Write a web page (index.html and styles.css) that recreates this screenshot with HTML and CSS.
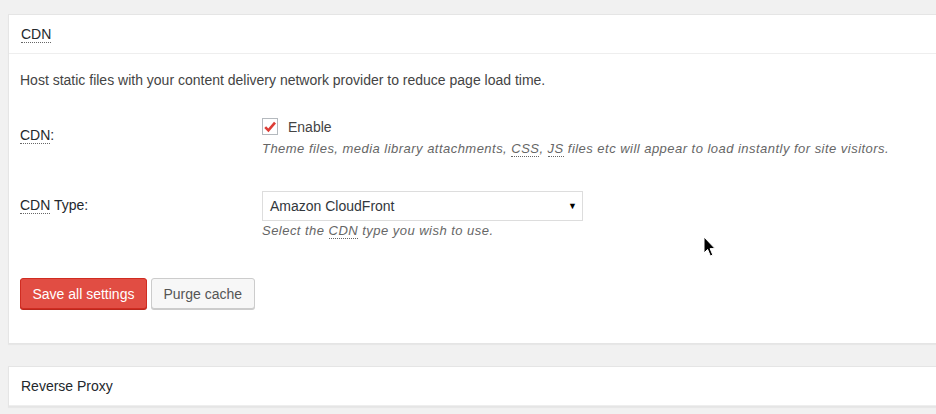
FILE: index.html
```html
<!DOCTYPE html>
<html lang="en">
<head>
<meta charset="utf-8">
<title>CDN settings</title>
<link rel="stylesheet" href="styles.css">
</head>
<body>
<div class="wrap">
  <div class="postbox">
    <h3 class="hndle"><abbr title="Content Delivery Network">CDN</abbr></h3>
    <div class="inside">
      <p class="intro">Host static files with your content delivery network provider to reduce page load time.</p>
      <div class="form-row first">
        <div class="th"><abbr>CDN</abbr>:</div>
        <div class="td">
          <label class="check">
            <span class="box"><svg width="14" height="14" viewBox="0 0 14 14"><path d="M2.2 7.2 L5.4 10.4 L12 2.6" fill="none" stroke="#dd3d36" stroke-width="2.6" stroke-linejoin="miter"/></svg></span>
            <span>Enable</span>
          </label>
          <p class="desc">Theme files, media library attachments, <abbr>CSS</abbr>, <abbr>JS</abbr> files etc will appear to load instantly for site visitors.</p>
        </div>
      </div>
      <div class="form-row">
        <div class="th th-select"><abbr>CDN</abbr> Type:</div>
        <div class="td">
          <div class="select"><span>Amazon CloudFront</span><span class="arrow">&#9660;</span></div>
          <p class="desc desc-tight">Select the <abbr>CDN</abbr> type you wish to use.</p>
        </div>
      </div>
      <div class="actions">
        <button class="btn btn-primary">Save all settings</button>
        <button class="btn">Purge cache</button>
      </div>
    </div>
  </div>
  <div class="postbox second">
    <h3 class="hndle">Reverse Proxy</h3>
  </div>
</div>
<svg class="cursor" width="14" height="22" viewBox="0 0 14 22"><path d="M1 1 L1 17 L4.6 13.4 L7.4 20 L9.8 19 L7.1 12.6 L12 12.6 Z" fill="#000" stroke="#fff" stroke-width="1"/></svg>
</body>
</html>
```
FILE: styles.css
```css
html, body {
  margin: 0;
  padding: 0;
  background: #f1f1f1;
  overflow: hidden;
  height: 414px;
}
body {
  font-family: "Liberation Sans", Arial, sans-serif;
  font-size: 14px;
  color: #444;
}
.wrap {
  padding: 14px 0 0 8px;
  width: 1100px;
}
.postbox {
  background: #fff;
  border: 1px solid #e5e5e5;
  box-shadow: 0 1px 1px rgba(0,0,0,0.04);
}
.postbox.second {
  margin-top: 22px;
}
.hndle {
  margin: 0;
  padding: 10px 12px 9px;
  font-size: 14px;
  font-weight: normal;
  line-height: 19px;
  color: #23282d;
  border-bottom: 1px solid #eee;
}
abbr {
  text-decoration: none;
  border-bottom: 1px dotted #666;
}
.inside {
  padding: 17px 11px 34px 11px;
}
.intro {
  margin: 0;
  line-height: 19px;
  font-size: 14px;
  color: #444;
}
.form-row {
  display: flex;
}
.form-row.first {
  margin-top: 13px;
}
.th {
  width: 242px;
  flex: none;
  padding-top: 23px;
  line-height: 19px;
  color: #23282d;
}
.th-select {
  padding-top: 20px;
}
.td {
  padding-top: 15px;
  padding-bottom: 18px;
}
.check {
  display: flex;
  align-items: center;
  height: 17px;
  color: #444;
}
.box {
  width: 16px;
  height: 17px;
  box-sizing: border-box;
  border: 1px solid #b4b9be;
  display: inline-flex;
  align-items: center;
  justify-content: center;
  margin-right: 10px;
  background: #fff;
}
.desc {
  margin: 4px 0 0;
  font-size: 13px;
  font-style: italic;
  color: #666;
  line-height: 19px;
  letter-spacing: 0.47px;
}
.desc-tight {
  margin-top: 0;
}
.select {
  width: 321px;
  height: 30px;
  box-sizing: border-box;
  border: 1px solid #ddd;
  display: flex;
  align-items: center;
  justify-content: space-between;
  padding: 0 5px 0 7px;
  color: #32373c;
}
.arrow {
  font-size: 9px;
  color: #000;
}
.actions {
  margin-top: 20px;
  display: flex;
  gap: 4px;
}
.btn {
  font-family: "Liberation Sans", Arial, sans-serif;
  font-size: 14px;
  height: 31px;
  padding: 0 11.5px;
  border: 1px solid #ccc;
  border-radius: 3px;
  background: #f7f7f7;
  color: #555;
  box-shadow: 0 1px 0 #ccc;
  margin: 0;
}
.btn-primary {
  background: #e14d43;
  border-color: #d02c21;
  color: #fff;
  box-shadow: 0 1px 0 #ba281e;
}
.cursor {
  position: absolute;
  left: 703px;
  top: 236px;
}
```
